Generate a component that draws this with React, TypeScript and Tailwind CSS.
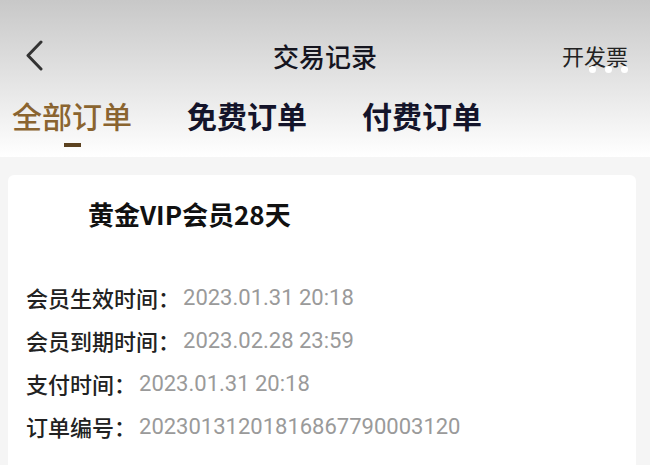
const rows = [
  { label: "会员生效时间：", value: "2023.01.31 20:18" },
  { label: "会员到期时间：", value: "2023.02.28 23:59" },
  { label: "支付时间：", value: "2023.01.31 20:18" },
  { label: "订单编号：", value: "20230131201816867790003120" },
]

const cjk = "font-['Noto_Sans_CJK_SC',_'Noto_Sans',_sans-serif]"

export default function App() {
  return (
    <div className={`w-[650px] h-[465px] overflow-hidden bg-[#f5f5f5] ${cjk}`}>
      {/* Header */}
      <div className="h-[157px] bg-gradient-to-b from-[#c8c8c8] to-white">
        <div className="h-[30px]" />
        <div className="relative flex items-center justify-between h-[50px] pl-[24px] pr-[22px]">
          <svg width="20" height="32" viewBox="0 0 20 32" fill="none">
            <polyline points="17,3 4,16.5 17,30" stroke="#333" strokeWidth="3" strokeLinecap="round" strokeLinejoin="round" />
          </svg>
          <span className="absolute left-1/2 -translate-x-1/2 text-[26px] font-medium text-[#15151f]">交易记录</span>
          <div className="relative">
            <span className="text-[22px] text-[#222]">开发票</span>
            <div className="absolute right-0 top-[27px] flex gap-[9px]">
              <span className="h-[7px] w-[7px] rounded-full bg-white" />
              <span className="h-[7px] w-[7px] rounded-full bg-white" />
              <span className="h-[7px] w-[7px] rounded-full bg-white" />
            </div>
          </div>
        </div>

        {/* Tabs */}
        <div className="flex gap-[55px] pl-[12px] mt-[17px]">
          <div className="flex flex-col items-center">
            <span className="text-[30px] leading-[36px] font-medium text-[#8a6430]">全部订单</span>
            <span className="mt-[10px] h-[4px] w-[17px] bg-[#5c4220]" />
          </div>
          <span className="text-[30px] leading-[36px] font-semibold text-[#14142a]">免费订单</span>
          <span className="text-[30px] leading-[36px] font-semibold text-[#14142a]">付费订单</span>
        </div>
      </div>

      {/* Card */}
      <div className="ml-[8px] mt-[18px] w-[628px] h-[300px] rounded-md bg-white">
        <div className="pl-[80px] pt-[22px] text-[26px] leading-[34px] font-bold text-[#111]">黄金VIP会员28天</div>
        <div className="mt-[51px] pl-[18px] flex flex-col gap-[13px]">
          {rows.map((r) => (
            <div key={r.label} className="flex items-center h-[30px]">
              <span className="text-[22px] font-medium text-[#222]">{r.label}</span>
              <span className="ml-[3px] text-[22px] text-[#9a9a9a] font-['Roboto',_sans-serif]">{r.value}</span>
            </div>
          ))}
        </div>
      </div>
    </div>
  )
}
